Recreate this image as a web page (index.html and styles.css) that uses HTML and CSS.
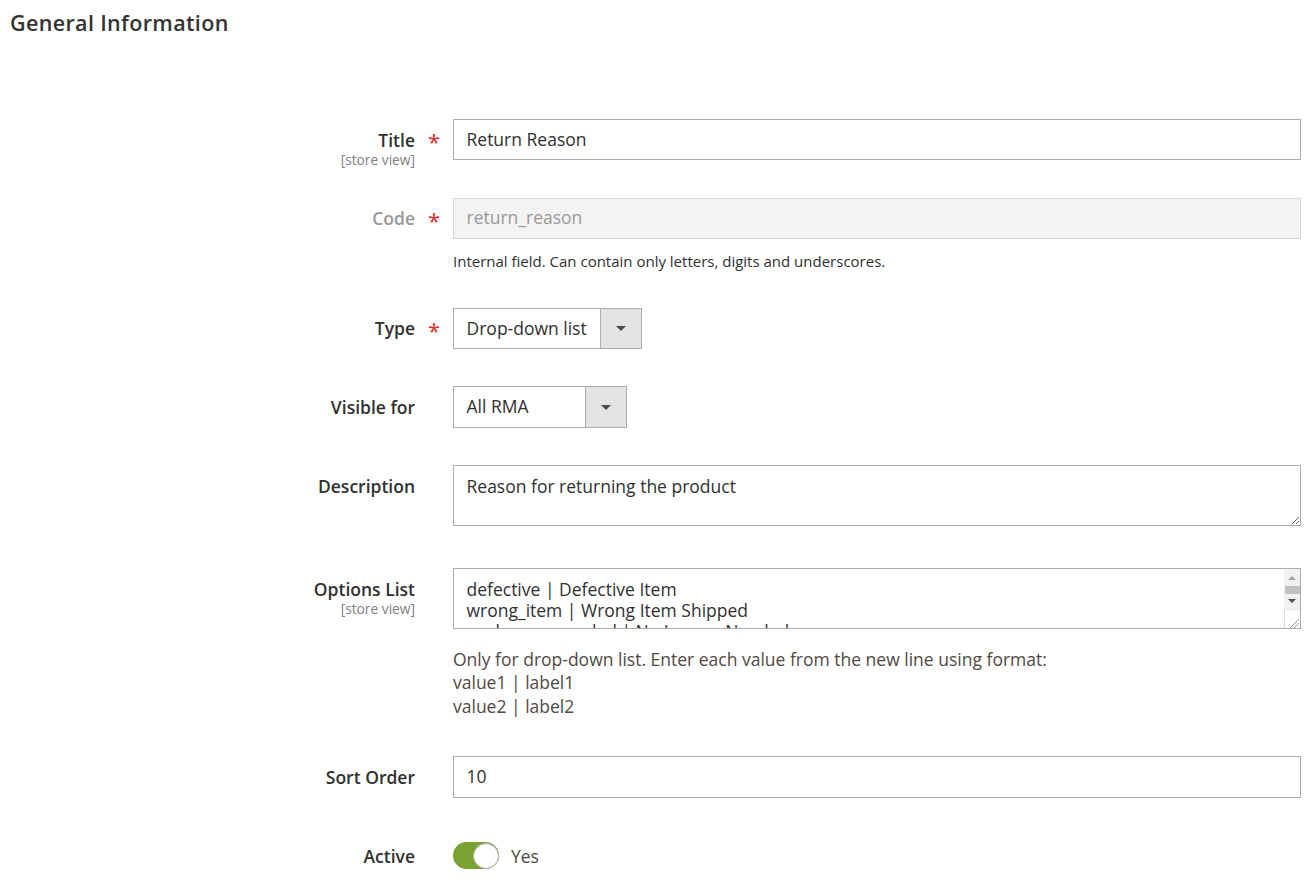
FILE: index.html
```html
<!doctype html>
<html>
<head>
<meta charset="utf-8" />
<title>General Information</title>
<link rel="stylesheet" href="styles.css">
</head>
<body>
	<h2 class="section-title">General Information</h2>
	<div class="form">
		<div class="field">
			<div class="field-label"><label>Title</label><span class="scope">[store view]</span></div>
			<div class="field-req">*</div>
			<div class="field-control"><input class="text-input" type="text" value="Return Reason"></div>
		</div>
		<div class="field disabled">
			<div class="field-label"><label>Code</label></div>
			<div class="field-req">*</div>
			<div class="field-control">
				<input class="text-input" type="text" value="return_reason" disabled>
				<div class="note">Internal field. Can contain only letters, digits and underscores.</div>
			</div>
		</div>
		<div class="field">
			<div class="field-label"><label>Type</label></div>
			<div class="field-req">*</div>
			<div class="field-control">
				<div class="select select-type"><span class="select-value">Drop-down list</span><span class="select-arrow"></span></div>
			</div>
		</div>
		<div class="field">
			<div class="field-label"><label>Visible for</label></div>
			<div class="field-req"></div>
			<div class="field-control">
				<div class="select select-visible"><span class="select-value">All RMA</span><span class="select-arrow"></span></div>
			</div>
		</div>
		<div class="field">
			<div class="field-label"><label>Description</label></div>
			<div class="field-req"></div>
			<div class="field-control"><textarea class="text-area">Reason for returning the product</textarea></div>
		</div>
		<div class="field">
			<div class="field-label"><label>Options List</label><span class="scope">[store view]</span></div>
			<div class="field-req"></div>
			<div class="field-control">
				<div class="scroll-area">
					<div class="scroll-area-text">defective | Defective Item
wrong_item | Wrong Item Shipped
no_longer_needed | No Longer Needed</div>
					<div class="scrollbar">
						<span class="sb-btn sb-up"></span>
						<span class="sb-track"><span class="sb-thumb"></span></span>
						<span class="sb-btn sb-down"></span>
						<span class="sb-corner">
							<svg width="15" height="19" viewBox="0 0 15 19"><path d="M14 10 L5 19 M14 14 L9 19" stroke="#9a9a9a" stroke-width="1" fill="none"/></svg>
						</span>
					</div>
				</div>
				<div class="note note-large">Only for drop-down list. Enter each value from the new line using format:<br>value1 | label1<br>value2 | label2</div>
			</div>
		</div>
		<div class="field">
			<div class="field-label"><label>Sort Order</label></div>
			<div class="field-req"></div>
			<div class="field-control"><input class="text-input" type="text" value="10"></div>
		</div>
		<div class="field">
			<div class="field-label"><label>Active</label></div>
			<div class="field-req"></div>
			<div class="field-control toggle-row">
				<span class="toggle"><span class="toggle-knob"></span></span>
				<span class="toggle-text">Yes</span>
			</div>
		</div>
	</div>
</body>
</html>
```
FILE: styles.css
```css
body{margin:0; background:#fff; font-family:"Open Sans","Liberation Sans",sans-serif; color:#303030;}
.section-title{margin:10px 0 0 10px; font-size:21.5px; line-height:26px; font-weight:600; letter-spacing:0.35px; color:#333;}
.form{margin-top:83px; width:1301px;}
.field{display:grid; grid-template-columns:415px 38px 848px; margin-bottom:37.5px; align-items:start;}
.field-label{height:41px; padding-top:10.5px; box-sizing:border-box; text-align:right;}
.field-label label{display:block; font-size:17.5px; line-height:20px; font-weight:600; color:#303030;}
.scope{display:block; margin-top:1px; font-size:13.75px; line-height:17px; color:#808080;}
.field-req{padding-top:12px; font-size:22px; line-height:20px; color:#e22626; text-align:center;}
.disabled .field-label label{color:#999;}

.text-input{display:block; width:100%; height:41.25px; box-sizing:border-box; border:1px solid #adadad; padding:0 12.5px 2px; font-family:inherit; font-size:17.5px; color:#303030; background:#fff; outline:none; margin:0;}
.text-input:disabled{background:#f3f3f3; border-color:#d6d6d6; color:#999;}
.note{margin-top:13px; font-size:15px; line-height:18px; color:#303030;}
.note-large{margin-top:18.5px; font-size:17.5px; line-height:23.8px; color:#514943;}

.select{display:flex; height:41.25px; box-sizing:border-box; border:1px solid #adadad; background:#fff;}
.select-type{width:189px;}
.select-visible{width:174px;}
.select-value{flex:1; padding-left:12.5px; font-size:17.5px; line-height:38px; color:#303030;}
.select-arrow{width:40px; border-left:1px solid #adadad; background:#e3e3e3; display:flex; align-items:center; justify-content:center;}
.select-arrow:after{content:""; border-left:5px solid transparent; border-right:5px solid transparent; border-top:5px solid #514943; margin-top:1px;}

.text-area{display:block; width:100%; height:61px; box-sizing:border-box; margin:0 0 4.5px; border:1px solid #adadad; padding:9.5px 12.5px; font-family:inherit; font-size:17.5px; line-height:21px; color:#303030; resize:both; outline:none;}

.scroll-area{display:flex; height:61px; box-sizing:border-box; margin-bottom:4.5px; border:1px solid #adadad; background:#fff;}
.scroll-area-text{flex:1; overflow:hidden; padding:9.5px 12.5px 0; font-size:17.5px; line-height:21px; color:#303030; white-space:pre;}
.scrollbar{width:16px; display:flex; flex-direction:column; background:#f1f1f1;}
.sb-btn{display:flex; align-items:center; justify-content:center;}
.sb-up{height:15px;}
.sb-up:after{content:""; border-left:4px solid transparent; border-right:4px solid transparent; border-bottom:4px solid #a3a3a3; margin-top:3px;}
.sb-track{height:11px;}
.sb-thumb{display:block; height:8px; margin:2px 0 0 1px; background:#c1c1c1;}
.sb-down{height:14px;}
.sb-down:after{content:""; border-left:4px solid transparent; border-right:4px solid transparent; border-top:4px solid #505050; margin-bottom:3px;}
.sb-corner{height:19px; background:#fff; border-left:1px solid #dcdcdc; border-top:1px solid #e6e6e6; box-sizing:border-box; display:flex; justify-content:flex-end; align-items:flex-end;}
.sb-corner svg{display:block;}

.toggle-row{display:flex; align-items:center; height:41.25px;}
.toggle{display:flex; justify-content:flex-end; align-items:center; width:46px; height:27px; box-sizing:border-box; border-radius:14px; background:#79a22e;}
.toggle-knob{width:26px; height:26px; box-sizing:border-box; border-radius:50%; background:#fff; border:1px solid #adadad;}
.toggle-text{margin-left:12px; font-size:17.5px; color:#514943;}
```
